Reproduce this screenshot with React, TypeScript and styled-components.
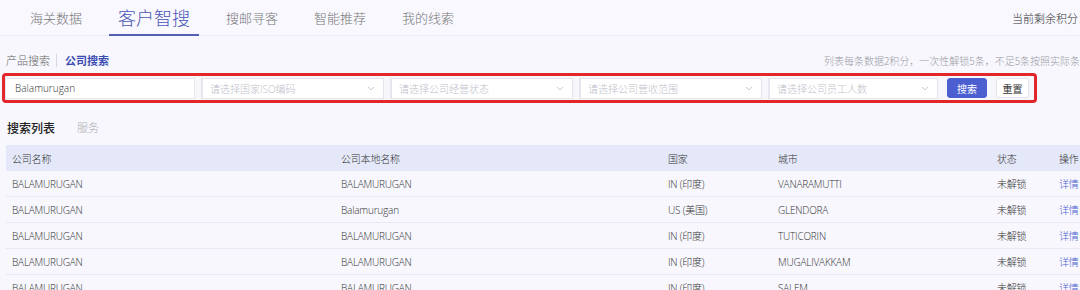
import React from "react";
import styled, { createGlobalStyle } from "styled-components";

const Global = createGlobalStyle`
  html, body { margin: 0; padding: 0; }
  body {
    width: 1080px;
    height: 290px;
    overflow: hidden;
    background: #f7f7fd;
    font-family: "Open Sans", "Noto Sans CJK SC", sans-serif;
    color: #333;
  }
`;

const Page = styled.div`
  width: 1080px;
  display: flex;
  flex-direction: column;
`;

const TabBar = styled.div`
  height: 35px;
  display: flex;
  align-items: stretch;
  padding-left: 21px;
  border-bottom: 1px solid #ececf5;
  background: #f8f8fe;
`;

const Tab = styled.div<{ $active?: boolean }>`
  display: flex;
  align-items: center;
  padding: 0 9px;
  margin-right: 18px;
  font-family: "Noto Sans CJK SC", sans-serif;
  font-weight: 300;
  font-size: ${(p) => (p.$active ? "18px" : "13px")};
  color: ${(p) => (p.$active ? "#4a56b6" : "#777")};
  border-bottom: 2px solid ${(p) => (p.$active ? "#5360b4" : "transparent")};
  margin-bottom: -1px;
`;

const Spacer = styled.div`
  flex: 1;
`;

const Clip = styled.div<{ $w: number; $size: number; $color: string }>`
  width: ${(p) => p.$w}px;
  flex-shrink: 0;
  overflow: hidden;
  white-space: nowrap;
  display: flex;
  align-items: center;
  font-family: "Noto Sans CJK SC", sans-serif;
  font-weight: 300;
  font-size: ${(p) => p.$size}px;
  color: ${(p) => p.$color};
`;

const SubRow = styled.div`
  height: 26px;
  margin-top: 11px;
  display: flex;
  align-items: center;
  padding-left: 6px;
`;

const SubLink = styled.span<{ $active?: boolean }>`
  font-family: "Noto Sans CJK SC", sans-serif;
  font-size: 11px;
  color: ${(p) => (p.$active ? "#3b4db3" : "#666")};
  font-weight: ${(p) => (p.$active ? 700 : 300)};
`;

const Sep = styled.span`
  width: 1px;
  height: 13px;
  background: #d8d8e0;
  margin: 0 8px 0 6px;
`;

const FilterBox = styled.div`
  margin-left: 2px;
  width: 1029px;
  height: 24px;
  border: 3px solid #e2262b;
  border-radius: 4px;
  display: flex;
  align-items: center;
  background: #f6f6fb;
`;

const TextInput = styled.div`
  flex-shrink: 0;
  width: 190px;
  height: 21px;
  background: #fff;
  border: 1px solid #e6e6ee;
  display: flex;
  align-items: center;
  padding-left: 9px;
  box-sizing: border-box;
  font-size: 10px;
  font-weight: 300;
  color: #333;
`;

const Select = styled.div<{ $w: number }>`
  flex-shrink: 0;
  width: ${(p) => p.$w}px;
  height: 21px;
  margin-left: 6px;
  box-sizing: border-box;
  background: #fff;
  border: 1px solid #e4e4ec;
  border-left: 2px solid #e6e6ee;
  display: flex;
  align-items: center;
  justify-content: space-between;
  padding: 0 8px 0 7px;
  font-family: "Open Sans", "Noto Sans CJK SC", sans-serif;
  font-size: 10px;
  font-weight: 300;
  color: #c0c0ca;
  white-space: nowrap;
`;

const Chevron = () => (
  <svg width="8" height="5" viewBox="0 0 8 5" fill="none">
    <path d="M1 1l3 3 3-3" stroke="#c8c8d0" strokeWidth="1" />
  </svg>
);

const Button = styled.div<{ $primary?: boolean }>`
  flex-shrink: 0;
  white-space: nowrap;
  height: 20px;
  width: ${(p) => (p.$primary ? 40 : 33)}px;
  box-sizing: border-box;
  margin-left: ${(p) => (p.$primary ? 9 : 9)}px;
  border-radius: 3px;
  display: flex;
  align-items: center;
  justify-content: center;
  font-family: "Noto Sans CJK SC", sans-serif;
  font-size: 10px;
  background: ${(p) => (p.$primary ? "#4b5fd0" : "#fff")};
  color: ${(p) => (p.$primary ? "#fff" : "#333")};
  border: 1px solid ${(p) => (p.$primary ? "#4b5fd0" : "#e2e2ea")};
`;

const ListTabs = styled.div`
  height: 24px;
  margin-top: 12px;
  display: flex;
  align-items: center;
  padding-left: 7px;
  gap: 22px;
`;

const ListTab = styled.span<{ $active?: boolean }>`
  font-family: "Noto Sans CJK SC", sans-serif;
  font-size: ${(p) => (p.$active ? "12px" : "11px")};
  font-weight: ${(p) => (p.$active ? 500 : 300)};
  color: ${(p) => (p.$active ? "#222" : "#aaa")};
`;

const Table = styled.div`
  margin-top: 6px;
  margin-left: 6px;
  width: 1100px;
`;

const cols = "329px 327px 110px 219px 62px 1fr";

const HeadRow = styled.div`
  display: grid;
  grid-template-columns: ${cols};
  height: 26px;
  background: #e4e8f8;
  align-items: center;
`;

const Row = styled.div`
  display: grid;
  grid-template-columns: ${cols};
  height: 26px;
  box-sizing: border-box;
  border-bottom: 1px solid #e9e9f2;
  align-items: center;
`;

const Cell = styled.div<{ $head?: boolean; $link?: boolean }>`
  padding-left: 6px;
  white-space: nowrap;
  overflow: hidden;
  font-family: "Open Sans", "Noto Sans CJK SC", sans-serif;
  font-size: 10px;
  font-weight: 300;
  letter-spacing: -0.2px;
  color: ${(p) => (p.$link ? "#4b5fd0" : "#333")};
`;

const rows = [
  ["BALAMURUGAN", "BALAMURUGAN", "IN (印度)", "VANARAMUTTI"],
  ["BALAMURUGAN", "Balamurugan", "US (美国)", "GLENDORA"],
  ["BALAMURUGAN", "BALAMURUGAN", "IN (印度)", "TUTICORIN"],
  ["BALAMURUGAN", "BALAMURUGAN", "IN (印度)", "MUGALIVAKKAM"],
  ["BALAMURUGAN", "BALAMURUGAN", "IN (印度)", "SALEM"],
];

const selects: [string, number][] = [
  ["请选择国家ISO编码", 183],
  ["请选择公司经营状态", 183],
  ["请选择公司营收范围", 183],
  ["请选择公司员工人数", 170],
];

export default function App() {
  return (
    <Page>
      <Global />
      <TabBar>
        <Tab>海关数据</Tab>
        <Tab $active>客户智搜</Tab>
        <Tab>搜邮寻客</Tab>
        <Tab>智能推荐</Tab>
        <Tab>我的线索</Tab>
        <Spacer />
        <Clip $w={68} $size={11} $color="#333">当前剩余积分：1280</Clip>
      </TabBar>
      <SubRow>
        <SubLink>产品搜索</SubLink>
        <Sep />
        <SubLink $active>公司搜索</SubLink>
        <Spacer />
        <Clip $w={256} $size={10} $color="#9a9aa4">
          列表每条数据2积分，一次性解锁5条，不足5条按照实际条数扣除
        </Clip>
      </SubRow>
      <FilterBox>
        <TextInput>Balamurugan</TextInput>
        {selects.map(([t, w]) => (
          <Select key={t} $w={w}>
            <span>{t}</span>
            <Chevron />
          </Select>
        ))}
        <Button $primary>搜索</Button>
        <Button>重置</Button>
      </FilterBox>
      <ListTabs>
        <ListTab $active>搜索列表</ListTab>
        <ListTab>服务</ListTab>
      </ListTabs>
      <Table>
        <HeadRow>
          <Cell $head>公司名称</Cell>
          <Cell $head>公司本地名称</Cell>
          <Cell $head>国家</Cell>
          <Cell $head>城市</Cell>
          <Cell $head>状态</Cell>
          <Cell $head>操作</Cell>
        </HeadRow>
        {rows.map((r, i) => (
          <Row key={i}>
            <Cell>{r[0]}</Cell>
            <Cell>{r[1]}</Cell>
            <Cell>{r[2]}</Cell>
            <Cell>{r[3]}</Cell>
            <Cell>未解锁</Cell>
            <Cell $link>详情</Cell>
          </Row>
        ))}
      </Table>
    </Page>
  );
}
